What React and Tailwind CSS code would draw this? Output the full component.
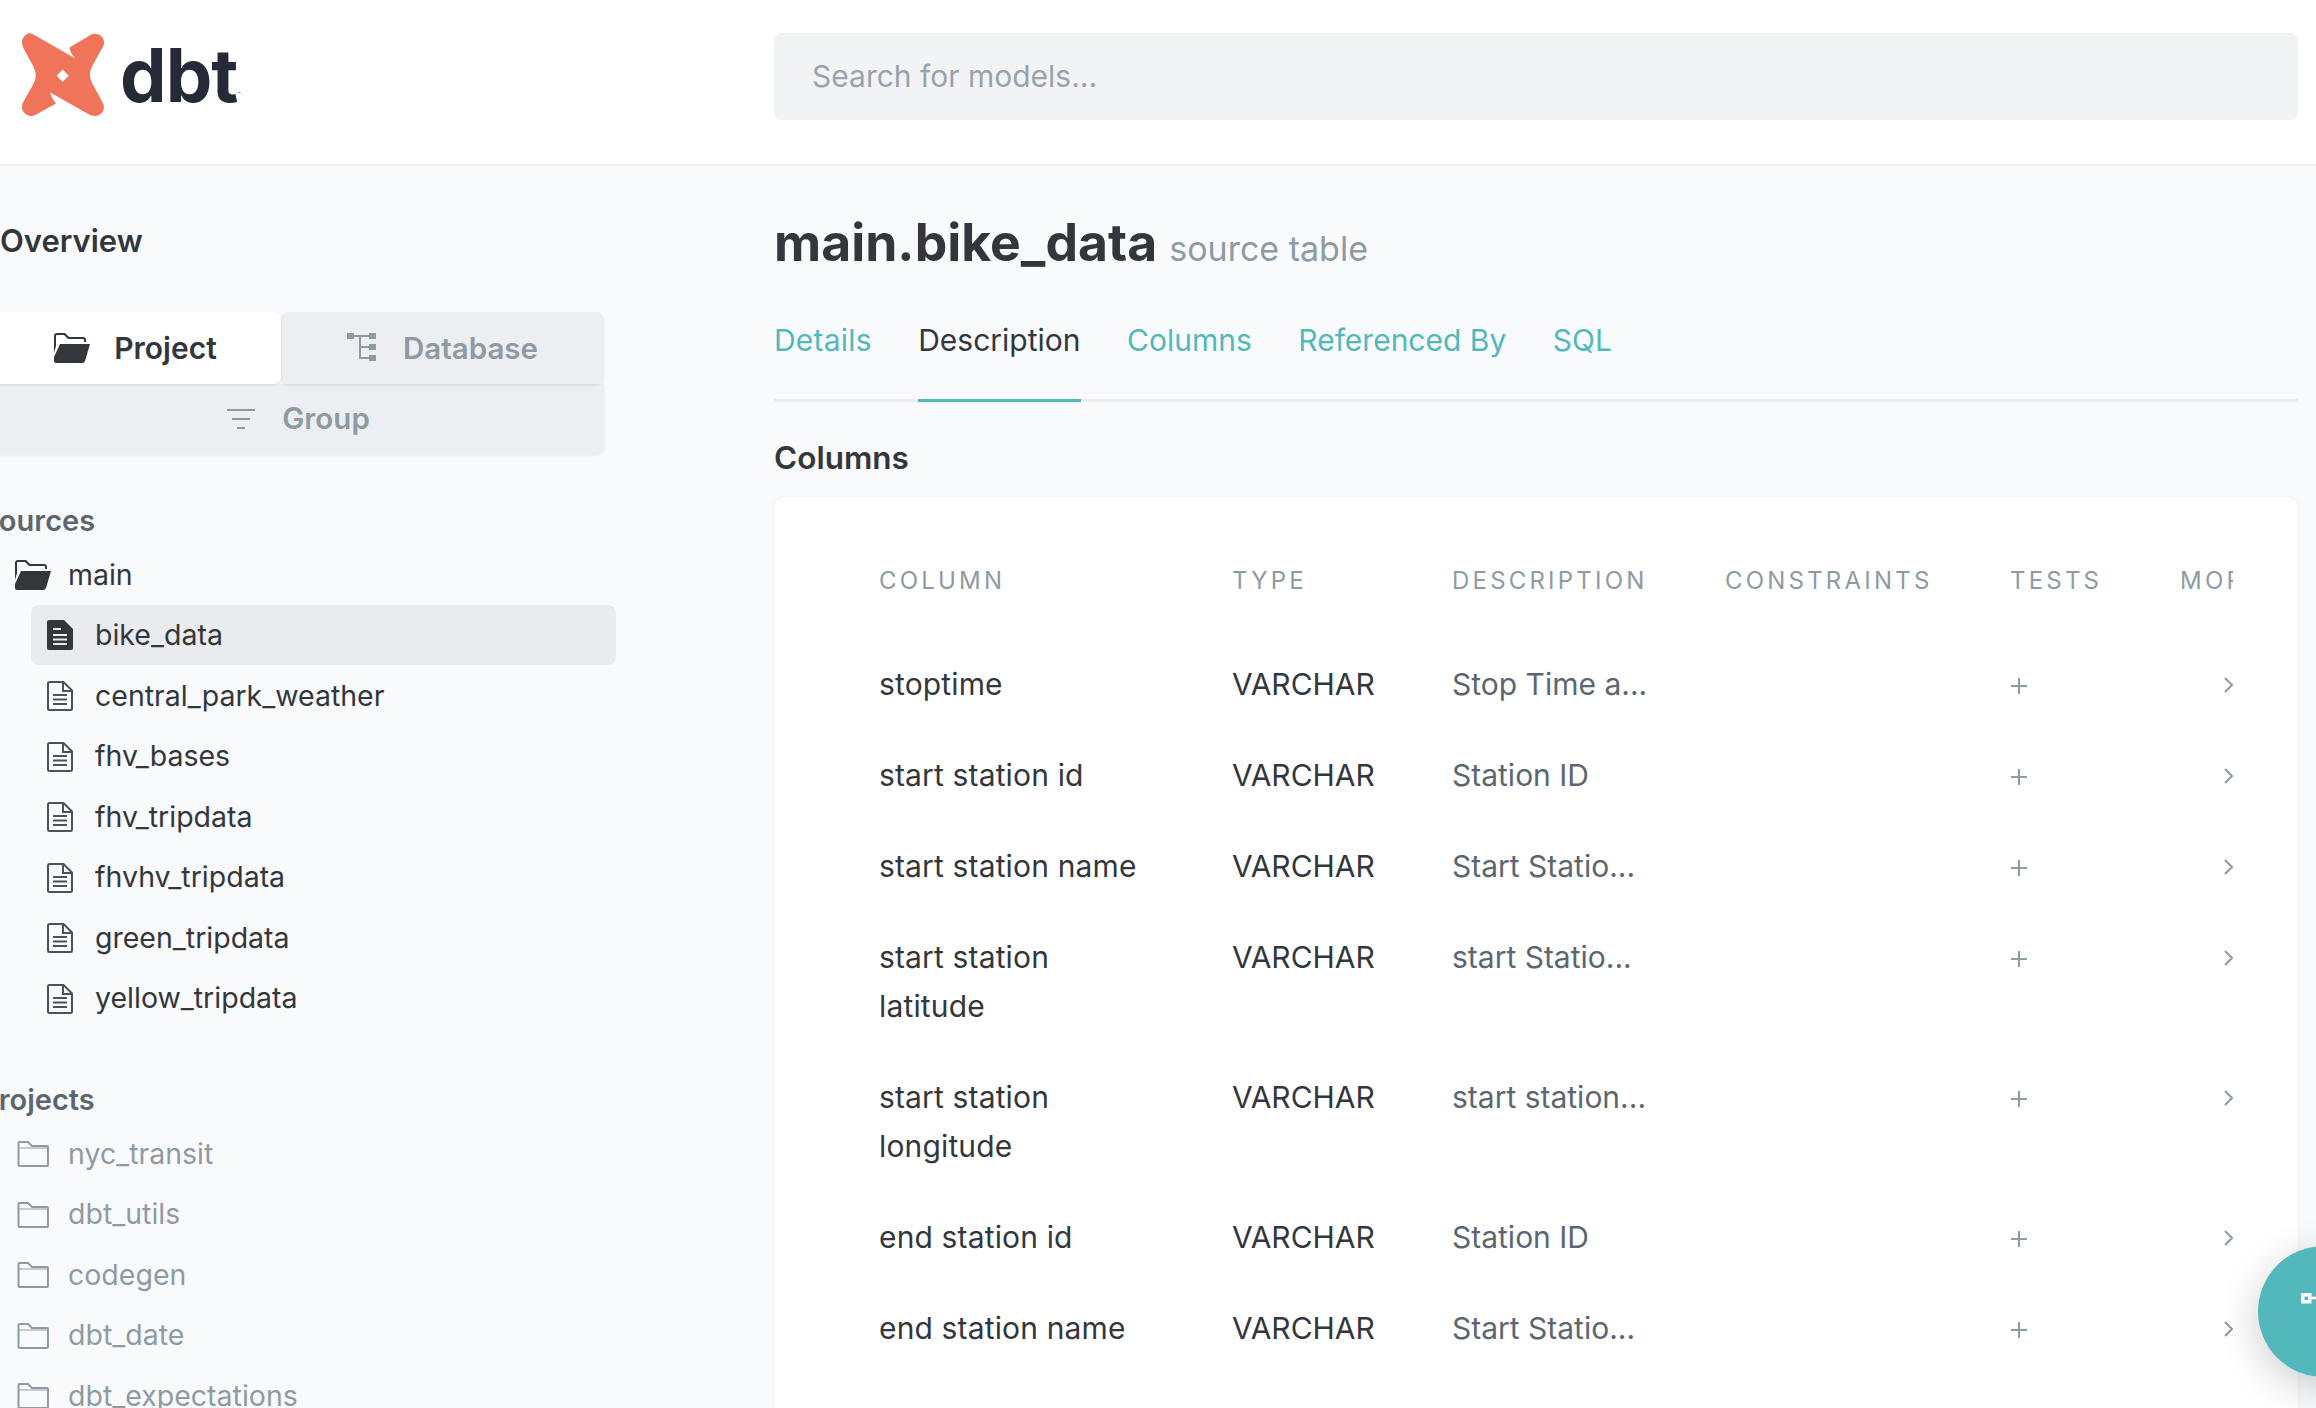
const rows = [
  { name: ["stoptime"], desc: "Stop Time a..." },
  { name: ["start station id"], desc: "Station ID" },
  { name: ["start station name"], desc: "Start Statio..." },
  { name: ["start station", "latitude"], desc: "start Statio..." },
  { name: ["start station", "longitude"], desc: "start station..." },
  { name: ["end station id"], desc: "Station ID" },
  { name: ["end station name"], desc: "Start Statio..." },
];

const sources = ["central_park_weather", "fhv_bases", "fhv_tripdata", "fhvhv_tripdata", "green_tripdata", "yellow_tripdata"];
const projects = ["nyc_transit", "dbt_utils", "codegen", "dbt_date", "dbt_expectations"];

function Logo() {
  return (
    <svg width="84" height="84" viewBox="64 102 250 250" className="shrink-0">
      <path
        fill="#f0745a"
        fillRule="evenodd"
        d="M97 104 L226 178 Q212 165 208 145 L272 107 Q290 100 305 113 Q318 128 305 148 L276 200 Q262 225 276 252 L305 305 Q318 328 302 342 Q288 355 268 345 L150 278 Q156 298 168 312 L108 345 Q88 355 74 340 Q60 325 72 305 L100 255 Q116 228 100 200 L72 148 Q60 125 75 110 Q85 100 97 104 Z M188 211 L206 229 L188 247 L170 229 Z"
      />
    </svg>
  );
}

function FolderOpen({ className = "" }) {
  return (
    <svg width="36" height="30" viewBox="0 0 36 30" className={className}>
      <path fill="#33373c" d="M0 3 Q0 0 3 0 L11 0 L15 4 L29 4 Q32 4 32 7 L32 9 L30 9 L30 7 Q30 6 29 6 L14 6 L10 2 L3 2 Q2 2 2 3 L2 13 L0 20 Z" />
      <path fill="#33373c" d="M6 11 L36 11 L31 28 Q30.500 30 28 30 L2 30 Q0 30 0 28 L0 24 Z" />
    </svg>
  );
}

function FolderLine() {
  return (
    <svg width="32" height="26" viewBox="0 0 32 26" fill="none" stroke="#8f9aa3" strokeWidth="2" className="shrink-0">
      <path d="M1.500 24 L1.500 2 Q1.500 1 2.500 1 L11 1 L15 5 L30 5 Q31 5 31 6 L31 24 Q31 25 30 25 L2.500 25 Q1.500 25 1.500 24 Z" />
      <path d="M1.500 7 L30 7" strokeWidth="1" />
    </svg>
  );
}

function FileSolid() {
  return (
    <svg width="26" height="30" viewBox="0 0 26 30" className="shrink-0">
      <path fill="#33373c" d="M2 0 L17 0 L26 9 L26 28 Q26 30 24 30 L2 30 Q0 30 0 28 L0 2 Q0 0 2 0 Z" />
      <path stroke="#e9ebee" strokeWidth="2" d="M6 9 L14 9 M6 15 L20 15 M6 19.500 L20 19.500 M6 24 L20 24" />
    </svg>
  );
}

function FileLine() {
  return (
    <svg width="26" height="30" viewBox="0 0 26 30" fill="none" stroke="#4d5258" strokeWidth="2" className="shrink-0">
      <path d="M2.500 1 L16.500 1 L25 9.500 L25 27.500 Q25 29 23.500 29 L2.500 29 Q1 29 1 27.500 L1 2.500 Q1 1 2.500 1 Z M16 1 L16 10 L25 10" />
      <path strokeWidth="1.800" d="M6 14 L20 14 M6 18.500 L20 18.500 M6 23 L20 23" />
    </svg>
  );
}

function TreeIcon() {
  return (
    <svg width="30" height="30" viewBox="0 0 30 30" className="shrink-0">
      <path fill="none" stroke="#8f9aa3" strokeWidth="2" d="M6 3 L22 3 M13 3 L13 25 L22 25 M13 14 L22 14" />
      <path fill="#8f9aa3" d="M0 0 H7 V6 H0 Z M22 0 H29 V6 H22 Z M22 11 H29 V17 H22 Z M22 22 H29 V28 H22 Z" />
    </svg>
  );
}

function FilterIcon() {
  return (
    <svg width="30" height="24" viewBox="0 0 30 24" fill="none" stroke="#8f9aa3" strokeWidth="2" className="shrink-0">
      <path d="M1 3 H29 M6 12 H24 M11 21 H19" />
    </svg>
  );
}

function Plus() {
  return (
    <svg width="18" height="18" viewBox="0 0 18 18" fill="none" stroke="#8f9aa3" strokeWidth="2">
      <path d="M9 1 V17 M1 9 H17" />
    </svg>
  );
}

function Chevron() {
  return (
    <svg width="9" height="16" viewBox="0 0 9 16" fill="none" stroke="#8f9aa3" strokeWidth="2">
      <path d="M1 1 L8 8 L1 15" />
    </svg>
  );
}

export default function App() {
  return (
    <div className="relative h-[1408px] w-[2316px] overflow-hidden bg-[#f9fafb] font-[Inter,sans-serif] text-[30px] text-[#33373c]">
      <header className="flex h-[166px] items-start border-b-2 border-[#eef0f2] bg-white pt-[33px]">
        <div className="flex w-[774px] items-center pl-[21px]">
          <Logo />
          <span className="ml-[15px] text-[74px] leading-none font-bold tracking-[-1px] text-[#262a38]">dbt</span>
          <span className="mt-[38px] text-[5px] leading-none text-[#262a38]">™</span>
        </div>
        <div className="flex h-[87px] w-[1524px] items-center rounded-lg bg-[#f1f3f5] pl-[38px] text-[#9aa3ab]">
          Search for models...
        </div>
      </header>

      <div className="flex">
        <aside className="h-[1242px] w-[774px] shrink-0 overflow-hidden text-[28.5px]">
          <h2 className="mt-[56px] ml-0 text-[31px] leading-[38px] font-semibold">Overview</h2>
          <div className="mt-[52px] ml-[-10px] w-[614px] font-semibold">
            <div className="flex h-[72px]">
              <div className="relative z-10 flex w-[291px] items-center justify-center gap-[24px] rounded-lg bg-white text-[30px] shadow-[0_1px_3px_rgba(0,0,0,0.1)]">
                <FolderOpen />
                <span>Project</span>
              </div>
              <div className="flex w-[323px] items-center justify-center gap-[26px] rounded-lg bg-[#eceef1] text-[29.5px] text-[#8f9aa3] shadow-[0_2px_3px_rgba(0,0,0,0.08)]">
                <TreeIcon />
                <span>Database</span>
              </div>
            </div>
            <div className="flex h-[69px] items-center justify-center gap-[26px] rounded-b-lg bg-[#eceef1] pl-[2px] text-[29.5px] text-[#8f9aa3] shadow-[0_2px_4px_rgba(0,0,0,0.08)]">
              <FilterIcon />
              <span>Group</span>
            </div>
          </div>

          <h3 className="mt-[49px] ml-[-20px] text-[29px] leading-[38px] font-semibold text-[#5c6670]">Sources</h3>
          <div className="mt-[16px] flex h-[38px] items-center gap-[17px] pl-[15px]">
            <FolderOpen className="shrink-0" />
            <span>main</span>
          </div>
          <div className="mt-[11px] ml-[31px] flex h-[60px] w-[585px] items-center gap-[22px] rounded-lg bg-[#e9ebee] pl-[16px]">
            <FileSolid />
            <span>bike_data</span>
          </div>
          <div className="pt-[1px]">
            {sources.map((s) => (
              <div key={s} className="flex h-[60.5px] items-center gap-[22px] pl-[47px]">
                <FileLine />
                <span>{s}</span>
              </div>
            ))}
          </div>

          <h3 className="mt-[52px] ml-[-20px] text-[29px] leading-[38px] font-semibold text-[#5c6670]">Projects</h3>
          <div className="mt-[5px]">
            {projects.map((p) => (
              <div key={p} className="flex h-[60.5px] items-center gap-[19px] pl-[17px] text-[#8f9aa3]">
                <FolderLine />
                <span>{p}</span>
              </div>
            ))}
          </div>
        </aside>

        <main className="w-[1524px] shrink-0">
          <div className="mt-[44px] flex h-[64px] items-baseline gap-[12px]">
            <h1 className="text-[51.7px] leading-[64px] font-bold">main.bike_data</h1>
            <span className="text-[34px] text-[#8f9aa3]">source table</span>
          </div>
          <nav className="mt-[12px] flex h-[116px] gap-[46.5px] border-b-[3px] border-[#eaecee] pt-[24px] text-[#53b8bb]">
            <span className="leading-[60px] tracking-[0.2px]">Details</span>
            <span className="relative leading-[60px] text-[#33373c]">
              Description
              <span className="absolute right-0 bottom-[-3px] left-0 block h-[3px] bg-[#53b8bb]"></span>
            </span>
            <span className="leading-[60px]">Columns</span>
            <span className="leading-[60px]">Referenced By</span>
            <span className="leading-[60px]">SQL</span>
          </nav>
          <h3 className="mt-[36px] text-[31.5px] leading-[40px] font-semibold">Columns</h3>
          <div className="mt-[19px] h-[1000px] rounded-t-xl bg-white pt-[71px] pl-[105px] shadow-[0_0_3px_rgba(0,0,0,0.08)]">
            <div className="w-[1354px] overflow-hidden">
              <div className="grid w-[1500px] grid-cols-[353px_220px_273px_285px_170px_199px] text-[24px] leading-[26px] tracking-[3.2px] text-[#8f9aa3] uppercase">
                <span>Column</span>
                <span>Type</span>
                <span>Description</span>
                <span>Constraints</span>
                <span>Tests</span>
                <span>More</span>
              </div>
              <div className="mt-[46px]">
                {rows.map((r) => (
                  <div key={r.name[0] + r.name[1]} className="grid w-[1354px] grid-cols-[353px_220px_273px_285px_170px_53px] pt-[20px] pb-[22px] leading-[49px]">
                    <div className="tracking-[0.15px]">
                      {r.name.map((n) => (
                        <div key={n}>{n}</div>
                      ))}
                    </div>
                    <div>VARCHAR</div>
                    <div className="text-[#5c6670]">{r.desc}</div>
                    <div></div>
                    <div className="flex h-[49px] items-center pt-[2px]">
                      <Plus />
                    </div>
                    <div className="flex h-[49px] items-center justify-end">
                      <Chevron />
                    </div>
                  </div>
                ))}
              </div>
            </div>
          </div>
        </main>
      </div>

      <button className="absolute top-[1246px] left-[2258px] h-[131px] w-[131px] rounded-full bg-[#53b8bb] shadow-[0_10px_40px_rgba(0,0,0,0.2)]">
        <svg width="58" height="12" viewBox="0 0 58 12" fill="none" stroke="#fff" strokeWidth="3.500" className="absolute top-[47px] left-[43px]">
          <rect x="1.750" y="1.750" width="7" height="7" />
          <path d="M9 5 H58" strokeWidth="2.500" />
        </svg>
      </button>
    </div>
  );
}
